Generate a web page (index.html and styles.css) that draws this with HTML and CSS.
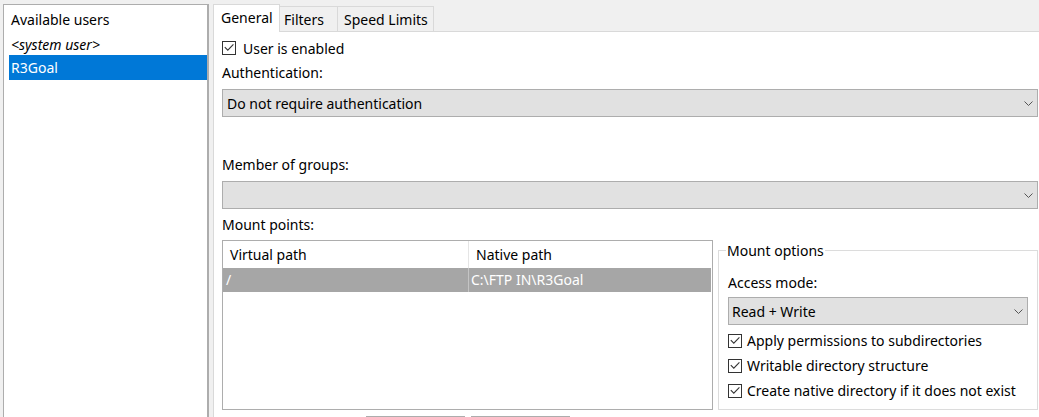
FILE: index.html
```html
<!DOCTYPE html>
<html lang="en">
<head>
<meta charset="utf-8">
<title>User settings</title>
<link rel="stylesheet" href="styles.css">
</head>
<body>
<div class="window">
  <aside class="users">
    <div class="user-row header-row">Available users</div>
    <div class="user-row system">&lt;system user&gt;</div>
    <div class="user-row selected">R3Goal</div>
  </aside>
  <main class="tabs">
    <div class="tab-strip">
      <div class="tab active tab-general">General</div>
      <div class="tab tab-filters">Filters</div>
      <div class="tab tab-speed">Speed Limits</div>
      <div class="tab-fill"></div>
    </div>
    <div class="tab-page">
      <div class="check-row">
        <span class="checkbox"><svg width="12" height="12" viewBox="0 0 12 12"><path d="M1.8 5.2 L4.8 8.2 L10.4 2.4" fill="none" stroke="#333" stroke-width="1.1"/></svg></span>
        <span>User is enabled</span>
      </div>
      <div class="label label-auth">Authentication:</div>
      <div class="combo">
        <span>Do not require authentication</span>
        <svg class="chevron" width="9" height="5" viewBox="0 0 9 5"><path d="M0.5 0.5 L4.5 4.5 L8.5 0.5" fill="none" stroke="#555" stroke-width="1"/></svg>
      </div>
      <div class="label label-groups">Member of groups:</div>
      <div class="combo">
        <span></span>
        <svg class="chevron" width="9" height="5" viewBox="0 0 9 5"><path d="M0.5 0.5 L4.5 4.5 L8.5 0.5" fill="none" stroke="#555" stroke-width="1"/></svg>
      </div>
      <div class="label label-mount">Mount points:</div>
      <div class="mount">
        <div class="list">
          <div class="list-head">
            <div class="col col-virtual">Virtual path</div>
            <div class="col col-native">Native path</div>
          </div>
          <div class="list-row selected-row">
            <div class="cell cell-virtual">/</div>
            <div class="cell cell-native">C:\FTP IN\R3Goal</div>
          </div>
        </div>
        <fieldset class="options">
          <legend>Mount options</legend>
          <div class="label label-access">Access mode:</div>
          <div class="combo combo-access">
            <span>Read + Write</span>
            <svg class="chevron" width="9" height="5" viewBox="0 0 9 5"><path d="M0.5 0.5 L4.5 4.5 L8.5 0.5" fill="none" stroke="#555" stroke-width="1"/></svg>
          </div>
          <div class="opt-checks">
            <div class="check-row opt">
              <span class="checkbox"><svg width="12" height="12" viewBox="0 0 12 12"><path d="M1.8 5.2 L4.8 8.2 L10.4 2.4" fill="none" stroke="#333" stroke-width="1.1"/></svg></span>
              <span>Apply permissions to subdirectories</span>
            </div>
            <div class="check-row opt">
              <span class="checkbox"><svg width="12" height="12" viewBox="0 0 12 12"><path d="M1.8 5.2 L4.8 8.2 L10.4 2.4" fill="none" stroke="#333" stroke-width="1.1"/></svg></span>
              <span>Writable directory structure</span>
            </div>
            <div class="check-row opt">
              <span class="checkbox"><svg width="12" height="12" viewBox="0 0 12 12"><path d="M1.8 5.2 L4.8 8.2 L10.4 2.4" fill="none" stroke="#333" stroke-width="1.1"/></svg></span>
              <span>Create native directory if it does not exist</span>
            </div>
          </div>
        </fieldset>
      </div>
      <div class="buttons">
        <div class="btn"></div>
        <div class="btn"></div>
      </div>
    </div>
  </main>
</div>
</body>
</html>
```
FILE: styles.css
```css
* { box-sizing: border-box; }
html, body {
  margin: 0;
  padding: 0;
  background: #f0f0f0;
}
body {
  width: 1039px;
  height: 417px;
  overflow: hidden;
  font-family: "Noto Sans", "Open Sans", sans-serif;
  font-size: 14px;
  color: #000;
}
.window {
  display: flex;
  height: 417px;
  overflow: hidden;
}

/* left user list */
.users {
  margin: 4px 0 0 3px;
  width: 206px;
  height: 460px;
  flex: none;
  background: #fff;
  border-left: 1px solid #adadad;
  border-top: 1px solid #adadad;
  border-right: 2px solid #adadad;
  padding: 0 0 0 5px;
}
.user-row {
  height: 25px;
  line-height: 25px;
  padding-left: 2px;
  white-space: nowrap;
}
.user-row.header-row,
.user-row.system {
  padding-top: 4px;
  line-height: 21px;
}
.user-row.system { font-style: italic; }
.user-row.selected {
  background: #0078d7;
  color: #fff;
  padding-top: 1px;
  line-height: 24px;
}

/* tabs */
.tabs {
  margin-left: 4px;
  flex: 1;
  min-width: 0;
  display: flex;
  flex-direction: column;
}
.tab-strip {
  display: flex;
  align-items: flex-end;
  height: 32px;
  flex: none;
}
.tab {
  height: 26px;
  line-height: 25px;
  border: 1px solid #d9d9d9;
  border-left: none;
  background: #f0f0f0;
  white-space: nowrap;
}
.tab.active {
  height: 28px;
  line-height: 26px;
  background: #fff;
  border-left: 1px solid #d9d9d9;
  border-bottom: none;
}
.tab-general { width: 67px; padding-left: 7px; }
.tab-filters { width: 58px; padding-left: 4px; }
.tab-speed { width: 96px; padding-left: 6px; }
.tab-fill {
  flex: 1;
  border-bottom: 1px solid #d9d9d9;
  height: 1px;
}
.tab-page {
  flex: 1;
  background: #fff;
  border-left: 1px solid #d9d9d9;
  padding: 6px 1px 0 8px;
}

.label {
  line-height: 20px;
  height: 20px;
  white-space: nowrap;
}
.label-auth { margin-top: 5px; }
.label-groups { margin-top: 38px; }
.label-mount { margin-top: 6px; }

.check-row {
  display: flex;
  align-items: center;
  height: 20px;
  gap: 7px;
  white-space: nowrap;
}
.checkbox {
  width: 14px;
  height: 14px;
  border: 1px solid #333;
  background: #fff;
  display: flex;
  align-items: center;
  justify-content: center;
  flex: none;
}

.combo {
  margin-top: 6px;
  height: 28px;
  border: 1px solid #adadad;
  background: #e1e1e1;
  display: flex;
  align-items: center;
  justify-content: space-between;
  padding: 0 4px 0 4px;
  white-space: nowrap;
}
.chevron { flex: none; }

/* mount points area */
.mount {
  margin-top: 5px;
  display: flex;
  gap: 5px;
  height: 170px;
}
.list {
  width: 491px;
  flex: none;
  border: 1px solid #adadad;
  background: #fff;
}
.list-head {
  display: flex;
  height: 27px;
}
.col {
  line-height: 28px;
  padding-left: 7px;
  white-space: nowrap;
}
.col-virtual {
  width: 246px;
  border-right: 1px solid #e5e5e5;
}
.col-native { flex: 1; }
.list-row {
  display: flex;
  height: 24px;
  margin-right: 1px;
}
.selected-row {
  background: #a6a6a6;
  color: #fff;
}
.cell {
  line-height: 24px;
  white-space: nowrap;
}
.cell-virtual {
  width: 246px;
  padding-left: 3px;
  border-right: 1px solid #c4c4c4;
}
.cell-native {
  flex: 1;
  padding-left: 2px;
}

.options {
  flex: 1;
  min-width: 0;
  margin: 0;
  padding: 0 9px 0 9px;
  border: 1px solid #dcdcdc;
}
.options legend {
  padding: 0 1px;
  margin-left: -2px;
  line-height: 21px;
}
.label-access { margin-top: 12px; }
.combo-access { margin-top: 4px; padding-left: 3px; }
.opt-checks { margin-top: 3px; }
.check-row.opt {
  height: 25px;
  gap: 5px;
}

.buttons {
  margin-top: 6px;
  width: 491px;
  display: flex;
  justify-content: center;
  gap: 6px;
}
.btn {
  width: 99px;
  height: 24px;
  border: 1px solid #adadad;
  background: #e1e1e1;
}
```
